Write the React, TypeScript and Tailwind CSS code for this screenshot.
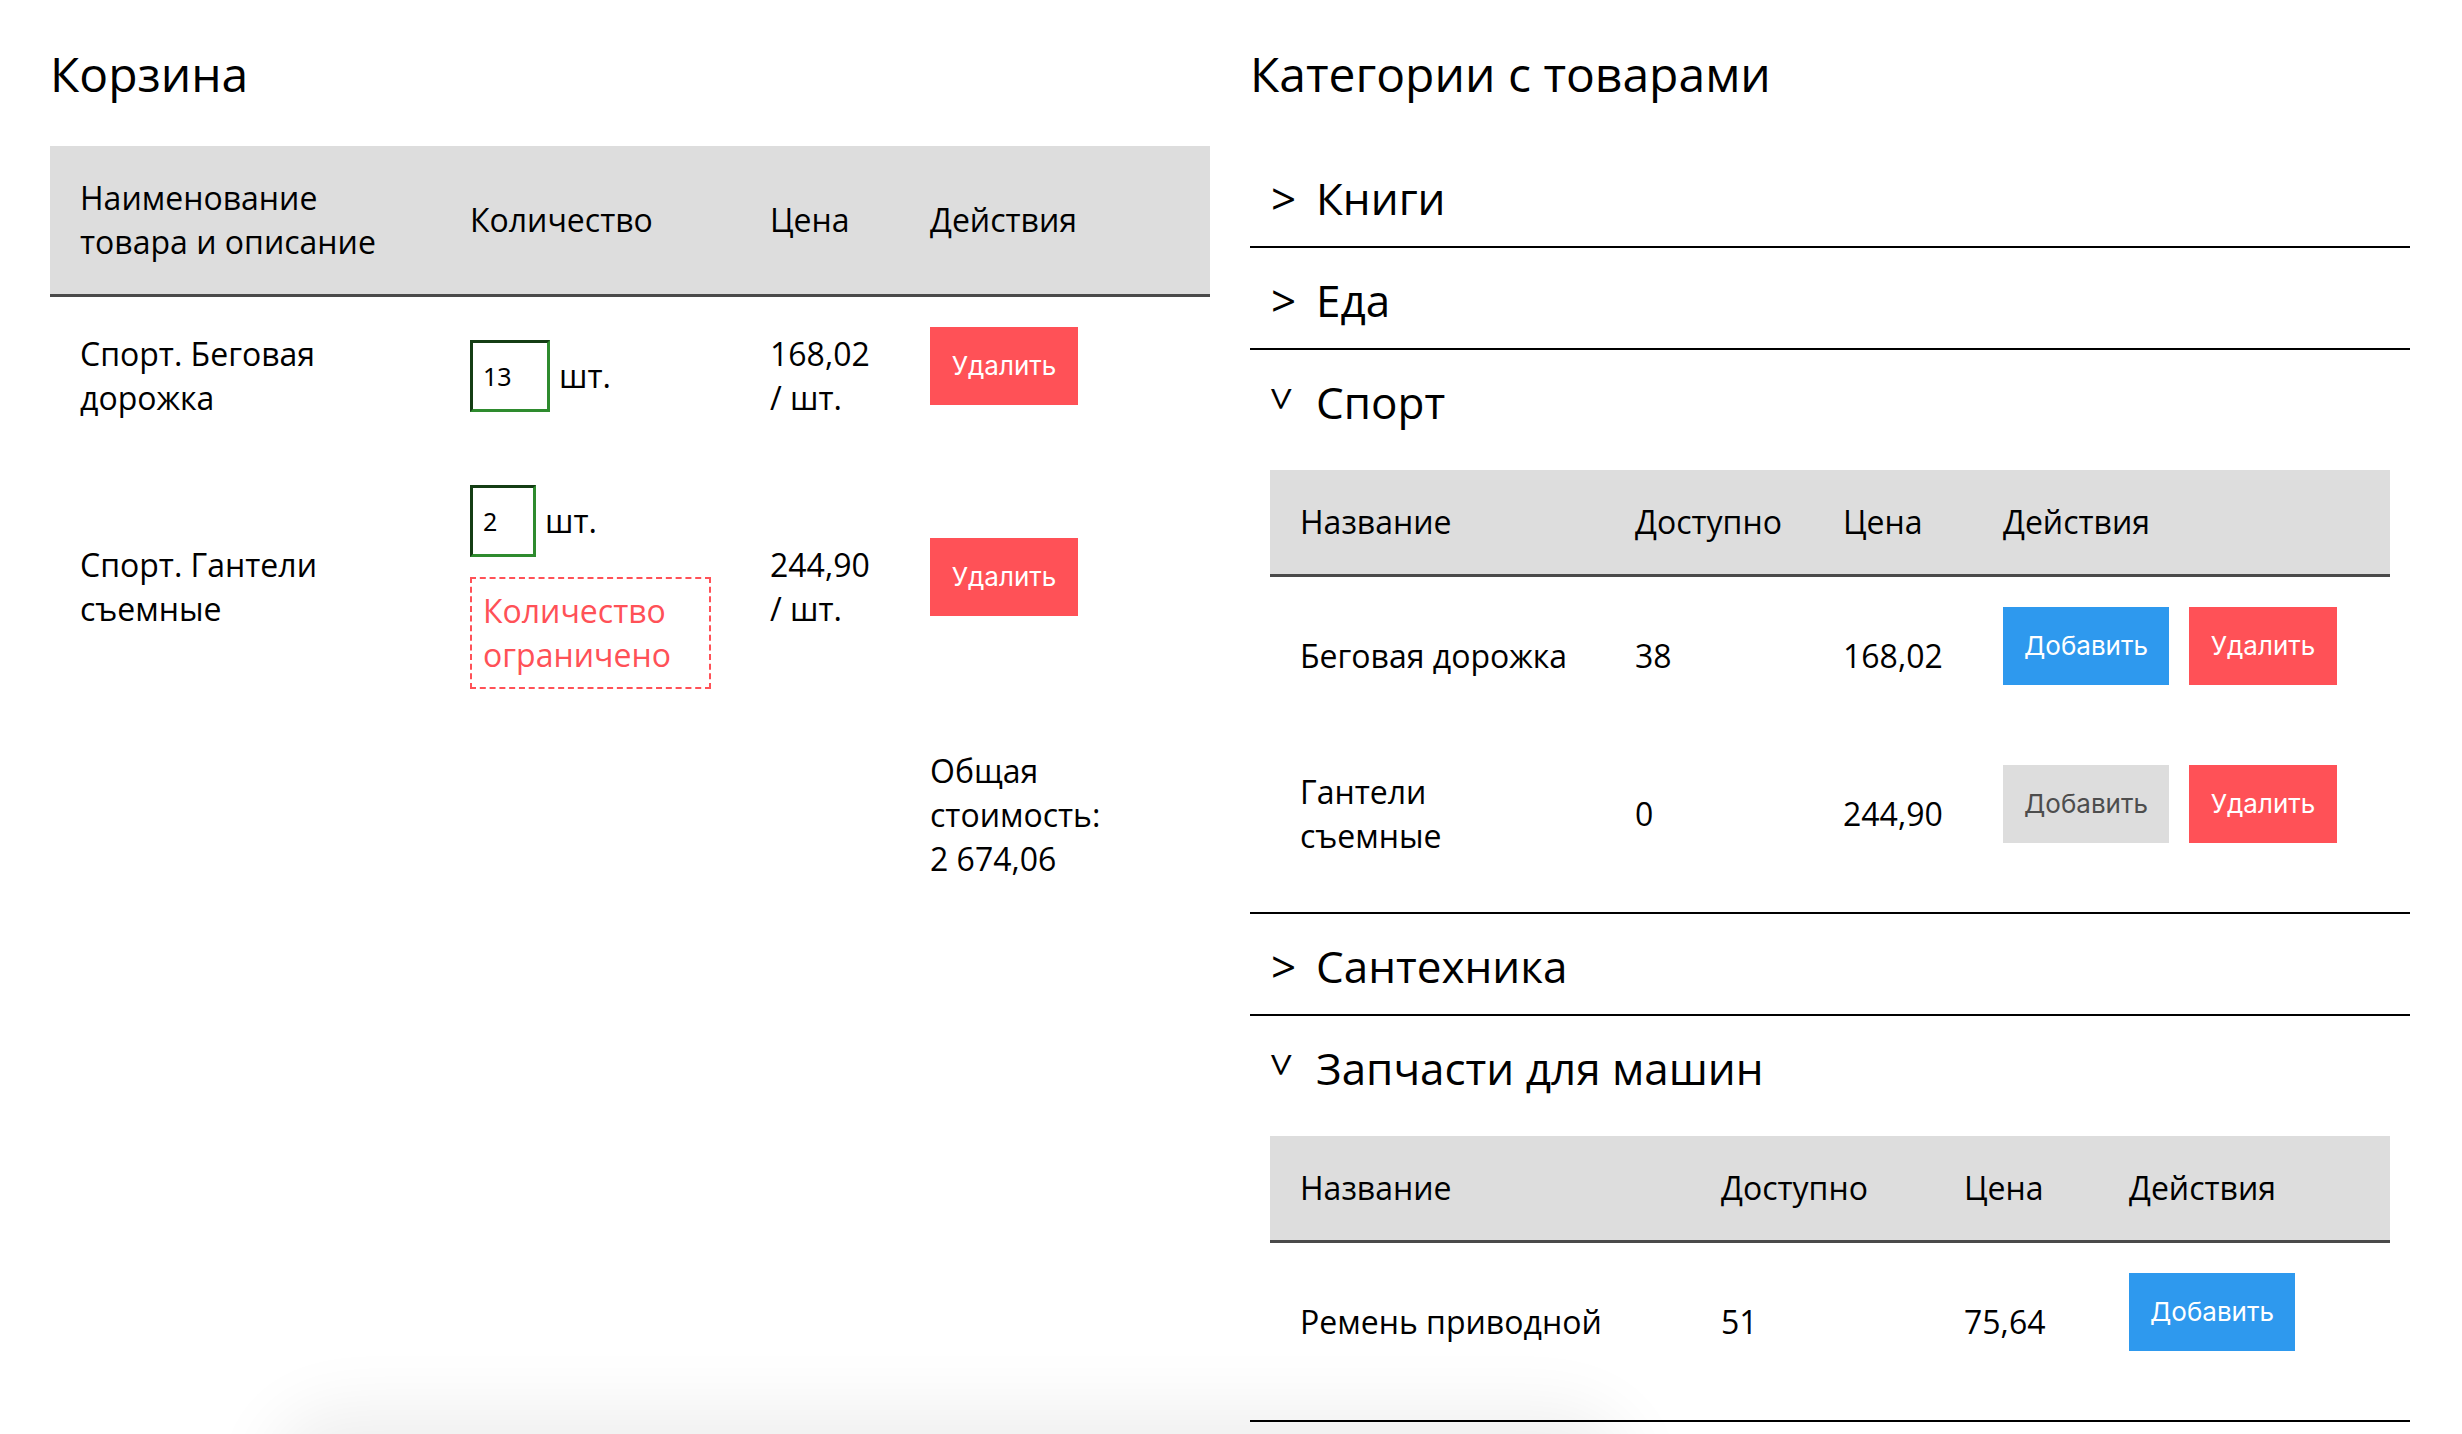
import React from "react";

const btnBase =
  "h-[78px] px-[22px] flex items-center justify-center text-[26px] leading-none font-['Inter',sans-serif]";

function RedBtn() {
  return <button className={`${btnBase} bg-[#ff5157] text-white w-[148px]`}>Удалить</button>;
}
function BlueBtn() {
  return <button className={`${btnBase} bg-[#2e99ee] text-white w-[166px]`}>Добавить</button>;
}
function GrayBtn() {
  return <button className={`${btnBase} bg-[#dddddd] text-[#4d4d4d] w-[166px]`}>Добавить</button>;
}

function QtyInput({ value, w }: { value: string; w: string }) {
  return (
    <div
      className={`${w} h-[72px] border-[3px] border-t-[#143d14] border-l-[#143d14] border-b-[#2e8b2e] border-r-[#2e8b2e] flex items-center pl-[10px] text-[25px] font-['Noto_Sans',sans-serif]`}
    >
      {value}
    </div>
  );
}

function CategoryHeader({ title, open }: { title: string; open?: boolean }) {
  return (
    <div className="pt-[19px] pb-[15px] flex items-start text-[44px] leading-[66px]">
      {open ? (
        <span className="w-[45px] pl-[22px] text-[42px] leading-[56px] inline-block">
          <span className="inline-block rotate-90 origin-center -translate-x-[2px] translate-y-[2px]">&gt;</span>
        </span>
      ) : (
        <span className="w-[45px] pl-[21px] text-[44px] inline-block">&gt;</span>
      )}
      <span className="pl-[21px]">{title}</span>
    </div>
  );
}

export default function App() {
  return (
    <div className="relative h-[1434px] overflow-hidden bg-white text-black font-['Open_Sans',sans-serif]">
      <div className="grid grid-cols-[1160px_1160px] gap-[40px] pl-[50px]">
        {/* Left: cart */}
        <div>
          <h1 className="mt-[38px] mb-[36px] text-[48px] leading-[72px]">Корзина</h1>
          <div className="text-[32px] leading-[44px]">
            <div className="grid grid-cols-[390px_300px_160px_310px] bg-[#dddddd] border-b-[3px] border-[#4a4a4a]">
              <div className="px-[30px] py-[30px]">
                Наименование
                <br />
                товара и описание
              </div>
              <div className="px-[30px] py-[30px] flex items-center">Количество</div>
              <div className="px-[30px] py-[30px] flex items-center">Цена</div>
              <div className="px-[30px] py-[30px] flex items-center">Действия</div>
            </div>
            {/* Row 1 */}
            <div className="grid grid-cols-[390px_300px_160px_310px] items-center">
              <div className="px-[30px] py-[30px]">
                Спорт. Беговая
                <br />
                дорожка
              </div>
              <div className="px-[30px] py-[30px] flex items-center">
                <QtyInput value="13" w="w-[80px]" />
                <span className="ml-[9px]">шт.</span>
              </div>
              <div className="px-[30px] py-[30px]">
                168,02
                <br />/ шт.
              </div>
              <div className="px-[30px] py-[30px]">
                <div className="mb-[20px]">
                  <RedBtn />
                </div>
              </div>
            </div>
            {/* Row 2 */}
            <div className="grid grid-cols-[390px_300px_160px_310px] items-center">
              <div className="px-[30px] py-[30px]">
                Спорт. Гантели
                <br />
                съемные
              </div>
              <div className="px-[30px] py-[30px]">
                <div className="flex items-center">
                  <QtyInput value="2" w="w-[66px]" />
                  <span className="ml-[9px]">шт.</span>
                </div>
                <div className="mt-[20px] w-[241px] border-2 border-dashed border-[#ff5157] px-[11px] py-[10px] text-[#ff5157]">
                  Количество
                  <br />
                  ограничено
                </div>
              </div>
              <div className="px-[30px] py-[30px]">
                244,90
                <br />/ шт.
              </div>
              <div className="px-[30px] py-[30px]">
                <div className="mb-[20px]">
                  <RedBtn />
                </div>
              </div>
            </div>
            {/* Total */}
            <div className="grid grid-cols-[390px_300px_160px_310px] items-center">
              <div />
              <div />
              <div />
              <div className="px-[30px] py-[30px]">
                Общая
                <br />
                стоимость:
                <br />2 674,06
              </div>
            </div>
          </div>
        </div>

        {/* Right: categories */}
        <div>
          <h1 className="mt-[38px] mb-[36px] text-[48px] leading-[72px]">Категории с товарами</h1>

          <div className="border-b-2 border-black">
            <CategoryHeader title="Книги" />
          </div>
          <div className="border-b-2 border-black">
            <CategoryHeader title="Еда" />
          </div>
          <div className="border-b-2 border-black">
            <CategoryHeader title="Спорт" open />
            <div className="mx-[20px] mt-[20px] mb-[19px] text-[32px] leading-[44px]">
              <div className="grid grid-cols-[335px_208px_160px_1fr] bg-[#dddddd] border-b-[3px] border-[#4a4a4a]">
                <div className="p-[30px]">Название</div>
                <div className="p-[30px]">Доступно</div>
                <div className="p-[30px]">Цена</div>
                <div className="p-[30px]">Действия</div>
              </div>
              <div className="grid grid-cols-[335px_208px_160px_1fr] items-center">
                <div className="p-[30px]">Беговая дорожка</div>
                <div className="p-[30px]">38</div>
                <div className="p-[30px]">168,02</div>
                <div className="p-[30px]">
                  <div className="flex gap-[20px] mb-[20px]">
                    <BlueBtn />
                    <RedBtn />
                  </div>
                </div>
              </div>
              <div className="grid grid-cols-[335px_208px_160px_1fr] items-center">
                <div className="p-[30px]">
                  Гантели
                  <br />
                  съемные
                </div>
                <div className="p-[30px]">0</div>
                <div className="p-[30px]">244,90</div>
                <div className="p-[30px]">
                  <div className="flex gap-[20px] mb-[20px]">
                    <GrayBtn />
                    <RedBtn />
                  </div>
                </div>
              </div>
            </div>
          </div>
          <div className="border-b-2 border-black">
            <CategoryHeader title="Сантехника" />
          </div>
          <div className="border-b-2 border-black">
            <CategoryHeader title="Запчасти для машин" open />
            <div className="mx-[20px] mt-[20px] mb-[19px] text-[32px] leading-[44px]">
              <div className="grid grid-cols-[421px_243px_165px_1fr] bg-[#dddddd] border-b-[3px] border-[#4a4a4a]">
                <div className="p-[30px]">Название</div>
                <div className="p-[30px]">Доступно</div>
                <div className="p-[30px]">Цена</div>
                <div className="p-[30px]">Действия</div>
              </div>
              <div className="grid grid-cols-[421px_243px_165px_1fr] items-center">
                <div className="p-[30px]">Ремень приводной</div>
                <div className="p-[30px]">51</div>
                <div className="p-[30px]">75,64</div>
                <div className="p-[30px]">
                  <div className="flex gap-[20px] mb-[20px]">
                    <BlueBtn />
                  </div>
                </div>
              </div>
            </div>
          </div>
        </div>
      </div>
      <div className="pointer-events-none absolute left-[300px] top-[1440px] h-[80px] w-[1300px] rounded-[40px] shadow-[0_0_70px_30px_rgba(0,0,0,0.07)]" />
    </div>
  );
}
